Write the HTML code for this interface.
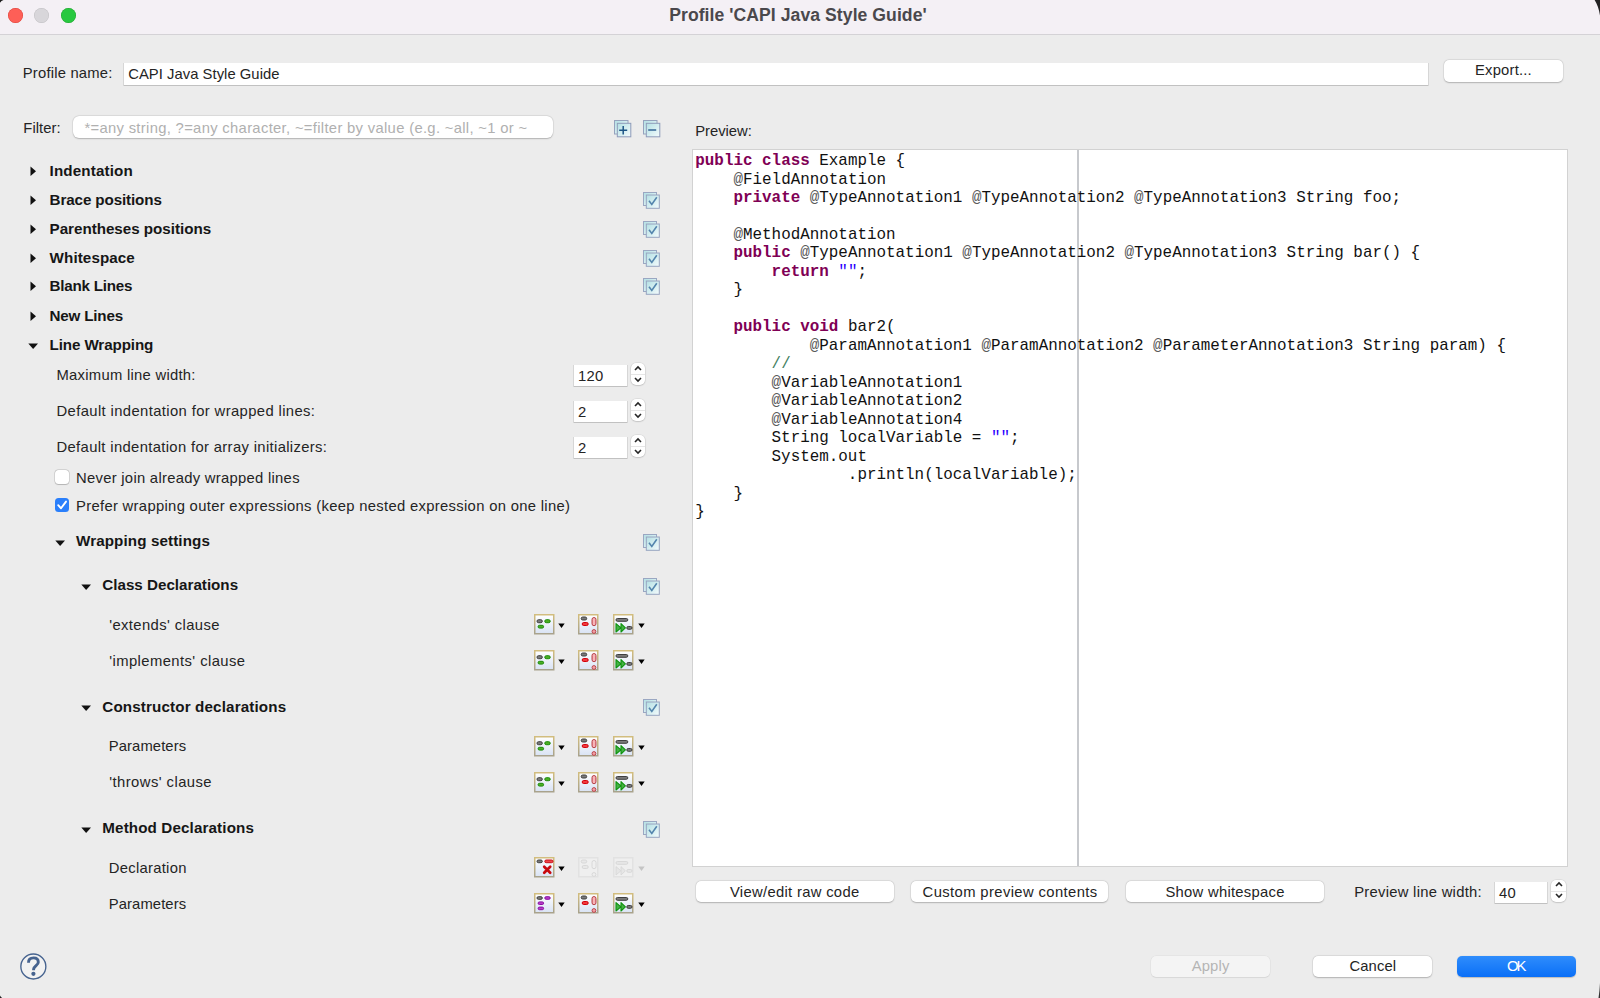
<!DOCTYPE html><html><head><meta charset="utf-8"><style>
html,body{margin:0;padding:0;}
body{width:1600px;height:998px;position:relative;overflow:hidden;background:#ececec;font-family:"Liberation Sans", sans-serif;}
.t{position:absolute;white-space:pre;}
.btn{position:absolute;background:#fff;border-radius:5px;box-shadow:0 0 0 0.5px rgba(0,0,0,0.07),0 0.5px 1.5px rgba(0,0,0,0.22);}
.fld{position:absolute;background:#fff;box-shadow:0 0.5px 0 0.5px rgba(0,0,0,0.18);}
</style></head><body>
<div style="position:absolute;left:0px;top:0px;width:1600px;height:34px;background:#f4f0f5"></div>
<div style="position:absolute;left:0px;top:34px;width:1600px;height:1px;background:#d4d2d6"></div>
<div style="position:absolute;left:8.1px;top:7.9px;width:15.4px;height:15.4px;background:#fe5f57;border-radius:50%;box-shadow:inset 0 0 0 0.5px rgba(200,40,30,0.6)"></div>
<div style="position:absolute;left:34.1px;top:7.9px;width:15.4px;height:15.4px;background:#d8d6da;border-radius:50%;box-shadow:inset 0 0 0 0.5px rgba(0,0,0,0.12)"></div>
<div style="position:absolute;left:61px;top:7.9px;width:15.4px;height:15.4px;background:#28c840;border-radius:50%;box-shadow:inset 0 0 0 0.5px rgba(20,140,30,0.6)"></div>
<div class="t" style="left:669.20px;top:4.78px;font-size:17.6px;line-height:20.24px;font-weight:bold;color:#4a484c;letter-spacing:0.059px;">Profile 'CAPI Java Style Guide'</div>
<div class="t" style="left:22.80px;top:65.26px;font-size:14.8px;line-height:17.02px;font-weight:normal;color:#242424;letter-spacing:0.193px;">Profile name:</div>
<div class="fld" style="left:124px;top:63px;width:1304px;height:22px;"></div>
<div class="t" style="left:128.20px;top:66.26px;font-size:14.8px;line-height:17.02px;font-weight:normal;color:#242424;letter-spacing:0.038px;">CAPI Java Style Guide</div>
<div class="btn" style="left:1444px;top:60px;width:119px;height:22px;"></div>
<div class="t" style="left:1475.00px;top:62.26px;font-size:14.8px;line-height:17.02px;font-weight:normal;color:#242424;letter-spacing:0.199px;">Export...</div>
<div class="t" style="left:23.30px;top:120.26px;font-size:14.8px;line-height:17.02px;font-weight:normal;color:#242424;letter-spacing:0.067px;">Filter:</div>
<div class="btn" style="left:73px;top:116px;width:480px;height:22px;border-radius:6px"></div>
<div class="t" style="left:84.40px;top:120.26px;font-size:14.8px;line-height:17.02px;font-weight:normal;color:#b0b0b0;letter-spacing:0.316px;">*=any string, ?=any character, ~=filter by value (e.g. ~all, ~1 or ~</div>
<div class="t" style="left:695.25px;top:122.96px;font-size:14.8px;line-height:17.02px;font-weight:normal;color:#242424;letter-spacing:-0.036px;">Preview:</div>
<div style="position:absolute;left:692px;top:149px;width:876px;height:718px;background:#fff;box-shadow:inset 0 0 0 1px #d2d2d2"></div>
<div style="position:absolute;left:1077px;top:150px;width:2px;height:716px;background:#c7c9cd"></div>
<svg width="0" height="0" style="position:absolute"><defs>
<linearGradient id="gbg" x1="0" y1="0" x2="0" y2="1"><stop offset="0" stop-color="#ffffff"/><stop offset="1" stop-color="#d9e3f4"/></linearGradient>
<linearGradient id="gbgd" x1="0" y1="0" x2="0" y2="1"><stop offset="0" stop-color="#f3f3f3"/><stop offset="1" stop-color="#ebebeb"/></linearGradient>
<linearGradient id="gbord" x1="0" y1="0" x2="0" y2="1"><stop offset="0" stop-color="#d2bd7e"/><stop offset="1" stop-color="#a8a28c"/></linearGradient>
<linearGradient id="gcb" x1="0" y1="0" x2="1" y2="1"><stop offset="0" stop-color="#b3e0e4"/><stop offset="1" stop-color="#f4fbfc"/></linearGradient>
<linearGradient id="gex" x1="0" y1="0" x2="1" y2="0"><stop offset="0" stop-color="#ec8a90"/><stop offset="0.5" stop-color="#fbc4c7"/><stop offset="1" stop-color="#e8828a"/></linearGradient>
</defs></svg>
<svg style="position:absolute;left:613.5px;top:119.5px;overflow:visible;" width="18" height="18" viewBox="0 0 18 18"><rect x="0.5" y="0.5" width="13.5" height="13.5" fill="url(#gcb)" stroke="#95a2bd" stroke-width="1"/><rect x="3.3" y="3.3" width="13.5" height="13.5" fill="url(#gcb)" stroke="#8e9bba" stroke-width="1"/><path d="M5.2 10.2 L13.2 10.2 M9.2 6 L9.2 14.5" stroke="#1d5586" stroke-width="1.5"/></svg>
<svg style="position:absolute;left:642.5px;top:119.5px;overflow:visible;" width="18" height="18" viewBox="0 0 18 18"><rect x="0.5" y="0.5" width="13.5" height="13.5" fill="url(#gcb)" stroke="#95a2bd" stroke-width="1"/><rect x="3.3" y="3.3" width="13.5" height="13.5" fill="url(#gcb)" stroke="#8e9bba" stroke-width="1"/><path d="M5.2 10 L13.2 10" stroke="#3e6d9b" stroke-width="1.6"/></svg>
<svg style="position:absolute;left:30px;top:165.5px;overflow:visible;" width="7" height="11" viewBox="0 0 7 11"><path d="M0.5 0.5 L6 5.2 L0.5 10 Z" fill="#111"/></svg>
<div class="t" style="left:49.60px;top:161.59px;font-size:15.2px;line-height:17.48px;font-weight:bold;color:#161616;letter-spacing:0.139px;">Indentation</div>
<svg style="position:absolute;left:30px;top:194.5px;overflow:visible;" width="7" height="11" viewBox="0 0 7 11"><path d="M0.5 0.5 L6 5.2 L0.5 10 Z" fill="#111"/></svg>
<div class="t" style="left:49.60px;top:190.59px;font-size:15.2px;line-height:17.48px;font-weight:bold;color:#161616;letter-spacing:-0.117px;">Brace positions</div>
<svg style="position:absolute;left:643px;top:191.5px;overflow:visible;" width="18" height="17" viewBox="0 0 18 17"><rect x="0.5" y="0.5" width="13" height="13" fill="url(#gcb)" stroke="#9aa7c2" stroke-width="1"/><rect x="3.3" y="3" width="13" height="13.3" fill="url(#gcb)" stroke="#97a4c0" stroke-width="1"/><path d="M6 8.8 L8.8 12.5 L13.8 5.3" fill="none" stroke="#5485ad" stroke-width="1.6"/></svg>
<svg style="position:absolute;left:30px;top:223.5px;overflow:visible;" width="7" height="11" viewBox="0 0 7 11"><path d="M0.5 0.5 L6 5.2 L0.5 10 Z" fill="#111"/></svg>
<div class="t" style="left:49.60px;top:219.59px;font-size:15.2px;line-height:17.48px;font-weight:bold;color:#161616;letter-spacing:-0.027px;">Parentheses positions</div>
<svg style="position:absolute;left:643px;top:220.5px;overflow:visible;" width="18" height="17" viewBox="0 0 18 17"><rect x="0.5" y="0.5" width="13" height="13" fill="url(#gcb)" stroke="#9aa7c2" stroke-width="1"/><rect x="3.3" y="3" width="13" height="13.3" fill="url(#gcb)" stroke="#97a4c0" stroke-width="1"/><path d="M6 8.8 L8.8 12.5 L13.8 5.3" fill="none" stroke="#5485ad" stroke-width="1.6"/></svg>
<svg style="position:absolute;left:30px;top:252.5px;overflow:visible;" width="7" height="11" viewBox="0 0 7 11"><path d="M0.5 0.5 L6 5.2 L0.5 10 Z" fill="#111"/></svg>
<div class="t" style="left:49.60px;top:248.59px;font-size:15.2px;line-height:17.48px;font-weight:bold;color:#161616;letter-spacing:0.092px;">Whitespace</div>
<svg style="position:absolute;left:643px;top:249.5px;overflow:visible;" width="18" height="17" viewBox="0 0 18 17"><rect x="0.5" y="0.5" width="13" height="13" fill="url(#gcb)" stroke="#9aa7c2" stroke-width="1"/><rect x="3.3" y="3" width="13" height="13.3" fill="url(#gcb)" stroke="#97a4c0" stroke-width="1"/><path d="M6 8.8 L8.8 12.5 L13.8 5.3" fill="none" stroke="#5485ad" stroke-width="1.6"/></svg>
<svg style="position:absolute;left:30px;top:281.4px;overflow:visible;" width="7" height="11" viewBox="0 0 7 11"><path d="M0.5 0.5 L6 5.2 L0.5 10 Z" fill="#111"/></svg>
<div class="t" style="left:49.60px;top:277.49px;font-size:15.2px;line-height:17.48px;font-weight:bold;color:#161616;letter-spacing:-0.241px;">Blank Lines</div>
<svg style="position:absolute;left:643px;top:278.4px;overflow:visible;" width="18" height="17" viewBox="0 0 18 17"><rect x="0.5" y="0.5" width="13" height="13" fill="url(#gcb)" stroke="#9aa7c2" stroke-width="1"/><rect x="3.3" y="3" width="13" height="13.3" fill="url(#gcb)" stroke="#97a4c0" stroke-width="1"/><path d="M6 8.8 L8.8 12.5 L13.8 5.3" fill="none" stroke="#5485ad" stroke-width="1.6"/></svg>
<svg style="position:absolute;left:30px;top:310.59999999999997px;overflow:visible;" width="7" height="11" viewBox="0 0 7 11"><path d="M0.5 0.5 L6 5.2 L0.5 10 Z" fill="#111"/></svg>
<div class="t" style="left:49.60px;top:306.69px;font-size:15.2px;line-height:17.48px;font-weight:bold;color:#161616;letter-spacing:-0.196px;">New Lines</div>
<svg style="position:absolute;left:28px;top:342.5px;overflow:visible;" width="11" height="7" viewBox="0 0 11 7"><path d="M0.3 0.5 L10 0.5 L5.15 6 Z" fill="#111"/></svg>
<div class="t" style="left:49.60px;top:335.79px;font-size:15.2px;line-height:17.48px;font-weight:bold;color:#161616;letter-spacing:-0.122px;">Line Wrapping</div>
<div class="t" style="left:56.50px;top:367.26px;font-size:14.8px;line-height:17.02px;font-weight:normal;color:#242424;letter-spacing:0.274px;">Maximum line width:</div>
<div class="fld" style="left:574px;top:365px;width:53px;height:21px;"></div>
<div class="t" style="left:578.00px;top:367.56px;font-size:14.8px;line-height:17.02px;font-weight:normal;color:#242424;letter-spacing:0.300px;">120</div>
<div class="btn" style="left:631px;top:363px;width:14px;height:22px;border-radius:5px"></div>
<div style="position:absolute;left:631px;top:374px;width:14px;height:1px;background:#e6e6e6"></div>
<svg style="position:absolute;left:634px;top:365.3px;overflow:visible;" width="8" height="20" viewBox="0 0 8 20"><path d="M1 5 L4 2 L7 5" fill="none" stroke="#262626" stroke-width="1.6"/><path d="M1 13 L4 16 L7 13" fill="none" stroke="#262626" stroke-width="1.6"/></svg>
<div class="t" style="left:56.50px;top:403.26px;font-size:14.8px;line-height:17.02px;font-weight:normal;color:#242424;letter-spacing:0.383px;">Default indentation for wrapped lines:</div>
<div class="fld" style="left:574px;top:401px;width:53px;height:21px;"></div>
<div class="t" style="left:578.00px;top:403.56px;font-size:14.8px;line-height:17.02px;font-weight:normal;color:#242424;letter-spacing:0.300px;">2</div>
<div class="btn" style="left:631px;top:399px;width:14px;height:22px;border-radius:5px"></div>
<div style="position:absolute;left:631px;top:410px;width:14px;height:1px;background:#e6e6e6"></div>
<svg style="position:absolute;left:634px;top:401.3px;overflow:visible;" width="8" height="20" viewBox="0 0 8 20"><path d="M1 5 L4 2 L7 5" fill="none" stroke="#262626" stroke-width="1.6"/><path d="M1 13 L4 16 L7 13" fill="none" stroke="#262626" stroke-width="1.6"/></svg>
<div class="t" style="left:56.50px;top:439.26px;font-size:14.8px;line-height:17.02px;font-weight:normal;color:#242424;letter-spacing:0.349px;">Default indentation for array initializers:</div>
<div class="fld" style="left:574px;top:437px;width:53px;height:21px;"></div>
<div class="t" style="left:578.00px;top:439.56px;font-size:14.8px;line-height:17.02px;font-weight:normal;color:#242424;letter-spacing:0.300px;">2</div>
<div class="btn" style="left:631px;top:435px;width:14px;height:22px;border-radius:5px"></div>
<div style="position:absolute;left:631px;top:446px;width:14px;height:1px;background:#e6e6e6"></div>
<svg style="position:absolute;left:634px;top:437.3px;overflow:visible;" width="8" height="20" viewBox="0 0 8 20"><path d="M1 5 L4 2 L7 5" fill="none" stroke="#262626" stroke-width="1.6"/><path d="M1 13 L4 16 L7 13" fill="none" stroke="#262626" stroke-width="1.6"/></svg>
<div style="position:absolute;left:55px;top:470px;width:14px;height:14px;background:#fff;border-radius:3.5px;box-shadow:0 0 0 0.5px rgba(0,0,0,0.2),0 0.5px 1px rgba(0,0,0,0.15)"></div>
<div class="t" style="left:76.00px;top:470.26px;font-size:14.8px;line-height:17.02px;font-weight:normal;color:#242424;letter-spacing:0.286px;">Never join already wrapped lines</div>
<div style="position:absolute;left:55px;top:498px;width:14px;height:14px;background:#2a7ffb;border-radius:3.5px"></div>
<svg style="position:absolute;left:55px;top:498px;overflow:visible;" width="14" height="14" viewBox="0 0 14 14"><path d="M3.2 7.2 L6 10.3 L11 3.6" fill="none" stroke="#fff" stroke-width="1.9" stroke-linecap="round" stroke-linejoin="round"/></svg>
<div class="t" style="left:76.00px;top:498.26px;font-size:14.8px;line-height:17.02px;font-weight:normal;color:#242424;letter-spacing:0.316px;">Prefer wrapping outer expressions (keep nested expression on one line)</div>
<svg style="position:absolute;left:54.5px;top:539.5px;overflow:visible;" width="11" height="7" viewBox="0 0 11 7"><path d="M0.3 0.5 L10 0.5 L5.15 6 Z" fill="#111"/></svg>
<div class="t" style="left:76.00px;top:531.99px;font-size:15.2px;line-height:17.48px;font-weight:bold;color:#161616;letter-spacing:0.106px;">Wrapping settings</div>
<svg style="position:absolute;left:643px;top:533.5px;overflow:visible;" width="18" height="17" viewBox="0 0 18 17"><rect x="0.5" y="0.5" width="13" height="13" fill="url(#gcb)" stroke="#9aa7c2" stroke-width="1"/><rect x="3.3" y="3" width="13" height="13.3" fill="url(#gcb)" stroke="#97a4c0" stroke-width="1"/><path d="M6 8.8 L8.8 12.5 L13.8 5.3" fill="none" stroke="#5485ad" stroke-width="1.6"/></svg>
<svg style="position:absolute;left:81px;top:583.6px;overflow:visible;" width="11" height="7" viewBox="0 0 11 7"><path d="M0.3 0.5 L10 0.5 L5.15 6 Z" fill="#111"/></svg>
<div class="t" style="left:102.30px;top:576.09px;font-size:15.2px;line-height:17.48px;font-weight:bold;color:#161616;letter-spacing:-0.007px;">Class Declarations</div>
<svg style="position:absolute;left:643px;top:577.5px;overflow:visible;" width="18" height="17" viewBox="0 0 18 17"><rect x="0.5" y="0.5" width="13" height="13" fill="url(#gcb)" stroke="#9aa7c2" stroke-width="1"/><rect x="3.3" y="3" width="13" height="13.3" fill="url(#gcb)" stroke="#97a4c0" stroke-width="1"/><path d="M6 8.8 L8.8 12.5 L13.8 5.3" fill="none" stroke="#5485ad" stroke-width="1.6"/></svg>
<div class="t" style="left:109.20px;top:616.96px;font-size:14.8px;line-height:17.02px;font-weight:normal;color:#242424;letter-spacing:0.395px;">'extends' clause</div>
<svg style="position:absolute;left:533.5px;top:614px;overflow:visible;" width="20.5" height="20.5" viewBox="0 0 20.5 20.5"><rect x="0.75" y="0.75" width="19" height="19" fill="url(#gbg)" stroke="url(#gbord)" stroke-width="1.5"/><rect x="3.0" y="5.7" width="5.300000000000001" height="2.999999999999999" rx="1.4999999999999996" ry="1.4999999999999996" fill="#7a7a7a" stroke="#3f3f3f" stroke-width="1"/><rect x="10.8" y="5.7" width="5.399999999999999" height="2.999999999999999" rx="1.4999999999999996" ry="1.4999999999999996" fill="#4caf25" stroke="#1a8a08" stroke-width="1"/><rect x="4.1" y="11.3" width="5.5" height="2.799999999999999" rx="1.3999999999999995" ry="1.3999999999999995" fill="#4caf25" stroke="#1a8a08" stroke-width="1"/></svg>
<svg style="position:absolute;left:558px;top:622.5px;overflow:visible;" width="7" height="6" viewBox="0 0 7 6"><path d="M0.3 0.5 L6.7 0.5 L3.5 5 Z" fill="#000"/></svg>
<svg style="position:absolute;left:578.2px;top:614px;overflow:visible;" width="20.5" height="20.5" viewBox="0 0 20.5 20.5"><rect x="0.75" y="0.75" width="19" height="19" fill="url(#gbg)" stroke="url(#gbord)" stroke-width="1.5"/><rect x="3.2" y="3.0" width="5.499999999999999" height="3.0" rx="1.5" ry="1.5" fill="#7a7a7a" stroke="#3f3f3f" stroke-width="1"/><rect x="4.2" y="8.5" width="5.999999999999999" height="3" rx="1.5" ry="1.5" fill="#f03a40" stroke="#d4000a" stroke-width="1"/><rect x="14" y="3.5" width="4" height="8.2" rx="2" fill="url(#gex)" stroke="#b8454b"/><circle cx="15.95" cy="17.5" r="1.9" fill="#f2a0a4" stroke="#b8454b"/></svg>
<svg style="position:absolute;left:612.8px;top:614px;overflow:visible;" width="20.5" height="20.5" viewBox="0 0 20.5 20.5"><rect x="0.75" y="0.75" width="19" height="19" fill="url(#gbg)" stroke="url(#gbord)" stroke-width="1.5"/><rect x="3.0" y="4.5" width="11.8" height="2.8" rx="1.4" ry="1.4" fill="#7a7a7a" stroke="#3f3f3f" stroke-width="1"/><path d="M3 9.6 L7.9 13.8 L3 18 Z M8 9.6 L12.4 13.8 L8 18 Z" fill="#45b045" stroke="#0d940d" stroke-width="1.1" stroke-linejoin="round"/><rect x="13.8" y="12.5" width="5.199999999999999" height="2.8000000000000007" rx="1.4000000000000004" ry="1.4000000000000004" fill="#7a7a7a" stroke="#3f3f3f" stroke-width="1"/></svg>
<svg style="position:absolute;left:637.5px;top:622.5px;overflow:visible;" width="7" height="6" viewBox="0 0 7 6"><path d="M0.3 0.5 L6.7 0.5 L3.5 5 Z" fill="#000"/></svg>
<div class="t" style="left:109.20px;top:652.86px;font-size:14.8px;line-height:17.02px;font-weight:normal;color:#242424;letter-spacing:0.427px;">'implements' clause</div>
<svg style="position:absolute;left:533.5px;top:650px;overflow:visible;" width="20.5" height="20.5" viewBox="0 0 20.5 20.5"><rect x="0.75" y="0.75" width="19" height="19" fill="url(#gbg)" stroke="url(#gbord)" stroke-width="1.5"/><rect x="3.0" y="5.7" width="5.300000000000001" height="2.999999999999999" rx="1.4999999999999996" ry="1.4999999999999996" fill="#7a7a7a" stroke="#3f3f3f" stroke-width="1"/><rect x="10.8" y="5.7" width="5.399999999999999" height="2.999999999999999" rx="1.4999999999999996" ry="1.4999999999999996" fill="#4caf25" stroke="#1a8a08" stroke-width="1"/><rect x="4.1" y="11.3" width="5.5" height="2.799999999999999" rx="1.3999999999999995" ry="1.3999999999999995" fill="#4caf25" stroke="#1a8a08" stroke-width="1"/></svg>
<svg style="position:absolute;left:558px;top:658.5px;overflow:visible;" width="7" height="6" viewBox="0 0 7 6"><path d="M0.3 0.5 L6.7 0.5 L3.5 5 Z" fill="#000"/></svg>
<svg style="position:absolute;left:578.2px;top:650px;overflow:visible;" width="20.5" height="20.5" viewBox="0 0 20.5 20.5"><rect x="0.75" y="0.75" width="19" height="19" fill="url(#gbg)" stroke="url(#gbord)" stroke-width="1.5"/><rect x="3.2" y="3.0" width="5.499999999999999" height="3.0" rx="1.5" ry="1.5" fill="#7a7a7a" stroke="#3f3f3f" stroke-width="1"/><rect x="4.2" y="8.5" width="5.999999999999999" height="3" rx="1.5" ry="1.5" fill="#f03a40" stroke="#d4000a" stroke-width="1"/><rect x="14" y="3.5" width="4" height="8.2" rx="2" fill="url(#gex)" stroke="#b8454b"/><circle cx="15.95" cy="17.5" r="1.9" fill="#f2a0a4" stroke="#b8454b"/></svg>
<svg style="position:absolute;left:612.8px;top:650px;overflow:visible;" width="20.5" height="20.5" viewBox="0 0 20.5 20.5"><rect x="0.75" y="0.75" width="19" height="19" fill="url(#gbg)" stroke="url(#gbord)" stroke-width="1.5"/><rect x="3.0" y="4.5" width="11.8" height="2.8" rx="1.4" ry="1.4" fill="#7a7a7a" stroke="#3f3f3f" stroke-width="1"/><path d="M3 9.6 L7.9 13.8 L3 18 Z M8 9.6 L12.4 13.8 L8 18 Z" fill="#45b045" stroke="#0d940d" stroke-width="1.1" stroke-linejoin="round"/><rect x="13.8" y="12.5" width="5.199999999999999" height="2.8000000000000007" rx="1.4000000000000004" ry="1.4000000000000004" fill="#7a7a7a" stroke="#3f3f3f" stroke-width="1"/></svg>
<svg style="position:absolute;left:637.5px;top:658.5px;overflow:visible;" width="7" height="6" viewBox="0 0 7 6"><path d="M0.3 0.5 L6.7 0.5 L3.5 5 Z" fill="#000"/></svg>
<svg style="position:absolute;left:81px;top:705.3px;overflow:visible;" width="11" height="7" viewBox="0 0 11 7"><path d="M0.3 0.5 L10 0.5 L5.15 6 Z" fill="#111"/></svg>
<div class="t" style="left:102.30px;top:697.79px;font-size:15.2px;line-height:17.48px;font-weight:bold;color:#161616;letter-spacing:0.141px;">Constructor declarations</div>
<svg style="position:absolute;left:643px;top:698.5px;overflow:visible;" width="18" height="17" viewBox="0 0 18 17"><rect x="0.5" y="0.5" width="13" height="13" fill="url(#gcb)" stroke="#9aa7c2" stroke-width="1"/><rect x="3.3" y="3" width="13" height="13.3" fill="url(#gcb)" stroke="#97a4c0" stroke-width="1"/><path d="M6 8.8 L8.8 12.5 L13.8 5.3" fill="none" stroke="#5485ad" stroke-width="1.6"/></svg>
<div class="t" style="left:108.80px;top:738.36px;font-size:14.8px;line-height:17.02px;font-weight:normal;color:#242424;letter-spacing:0.089px;">Parameters</div>
<svg style="position:absolute;left:533.5px;top:736px;overflow:visible;" width="20.5" height="20.5" viewBox="0 0 20.5 20.5"><rect x="0.75" y="0.75" width="19" height="19" fill="url(#gbg)" stroke="url(#gbord)" stroke-width="1.5"/><rect x="3.0" y="5.7" width="5.300000000000001" height="2.999999999999999" rx="1.4999999999999996" ry="1.4999999999999996" fill="#7a7a7a" stroke="#3f3f3f" stroke-width="1"/><rect x="10.8" y="5.7" width="5.399999999999999" height="2.999999999999999" rx="1.4999999999999996" ry="1.4999999999999996" fill="#4caf25" stroke="#1a8a08" stroke-width="1"/><rect x="4.1" y="11.3" width="5.5" height="2.799999999999999" rx="1.3999999999999995" ry="1.3999999999999995" fill="#4caf25" stroke="#1a8a08" stroke-width="1"/></svg>
<svg style="position:absolute;left:558px;top:744.5px;overflow:visible;" width="7" height="6" viewBox="0 0 7 6"><path d="M0.3 0.5 L6.7 0.5 L3.5 5 Z" fill="#000"/></svg>
<svg style="position:absolute;left:578.2px;top:736px;overflow:visible;" width="20.5" height="20.5" viewBox="0 0 20.5 20.5"><rect x="0.75" y="0.75" width="19" height="19" fill="url(#gbg)" stroke="url(#gbord)" stroke-width="1.5"/><rect x="3.2" y="3.0" width="5.499999999999999" height="3.0" rx="1.5" ry="1.5" fill="#7a7a7a" stroke="#3f3f3f" stroke-width="1"/><rect x="4.2" y="8.5" width="5.999999999999999" height="3" rx="1.5" ry="1.5" fill="#f03a40" stroke="#d4000a" stroke-width="1"/><rect x="14" y="3.5" width="4" height="8.2" rx="2" fill="url(#gex)" stroke="#b8454b"/><circle cx="15.95" cy="17.5" r="1.9" fill="#f2a0a4" stroke="#b8454b"/></svg>
<svg style="position:absolute;left:612.8px;top:736px;overflow:visible;" width="20.5" height="20.5" viewBox="0 0 20.5 20.5"><rect x="0.75" y="0.75" width="19" height="19" fill="url(#gbg)" stroke="url(#gbord)" stroke-width="1.5"/><rect x="3.0" y="4.5" width="11.8" height="2.8" rx="1.4" ry="1.4" fill="#7a7a7a" stroke="#3f3f3f" stroke-width="1"/><path d="M3 9.6 L7.9 13.8 L3 18 Z M8 9.6 L12.4 13.8 L8 18 Z" fill="#45b045" stroke="#0d940d" stroke-width="1.1" stroke-linejoin="round"/><rect x="13.8" y="12.5" width="5.199999999999999" height="2.8000000000000007" rx="1.4000000000000004" ry="1.4000000000000004" fill="#7a7a7a" stroke="#3f3f3f" stroke-width="1"/></svg>
<svg style="position:absolute;left:637.5px;top:744.5px;overflow:visible;" width="7" height="6" viewBox="0 0 7 6"><path d="M0.3 0.5 L6.7 0.5 L3.5 5 Z" fill="#000"/></svg>
<div class="t" style="left:109.20px;top:773.86px;font-size:14.8px;line-height:17.02px;font-weight:normal;color:#242424;letter-spacing:0.447px;">'throws' clause</div>
<svg style="position:absolute;left:533.5px;top:772px;overflow:visible;" width="20.5" height="20.5" viewBox="0 0 20.5 20.5"><rect x="0.75" y="0.75" width="19" height="19" fill="url(#gbg)" stroke="url(#gbord)" stroke-width="1.5"/><rect x="3.0" y="5.7" width="5.300000000000001" height="2.999999999999999" rx="1.4999999999999996" ry="1.4999999999999996" fill="#7a7a7a" stroke="#3f3f3f" stroke-width="1"/><rect x="10.8" y="5.7" width="5.399999999999999" height="2.999999999999999" rx="1.4999999999999996" ry="1.4999999999999996" fill="#4caf25" stroke="#1a8a08" stroke-width="1"/><rect x="4.1" y="11.3" width="5.5" height="2.799999999999999" rx="1.3999999999999995" ry="1.3999999999999995" fill="#4caf25" stroke="#1a8a08" stroke-width="1"/></svg>
<svg style="position:absolute;left:558px;top:780.5px;overflow:visible;" width="7" height="6" viewBox="0 0 7 6"><path d="M0.3 0.5 L6.7 0.5 L3.5 5 Z" fill="#000"/></svg>
<svg style="position:absolute;left:578.2px;top:772px;overflow:visible;" width="20.5" height="20.5" viewBox="0 0 20.5 20.5"><rect x="0.75" y="0.75" width="19" height="19" fill="url(#gbg)" stroke="url(#gbord)" stroke-width="1.5"/><rect x="3.2" y="3.0" width="5.499999999999999" height="3.0" rx="1.5" ry="1.5" fill="#7a7a7a" stroke="#3f3f3f" stroke-width="1"/><rect x="4.2" y="8.5" width="5.999999999999999" height="3" rx="1.5" ry="1.5" fill="#f03a40" stroke="#d4000a" stroke-width="1"/><rect x="14" y="3.5" width="4" height="8.2" rx="2" fill="url(#gex)" stroke="#b8454b"/><circle cx="15.95" cy="17.5" r="1.9" fill="#f2a0a4" stroke="#b8454b"/></svg>
<svg style="position:absolute;left:612.8px;top:772px;overflow:visible;" width="20.5" height="20.5" viewBox="0 0 20.5 20.5"><rect x="0.75" y="0.75" width="19" height="19" fill="url(#gbg)" stroke="url(#gbord)" stroke-width="1.5"/><rect x="3.0" y="4.5" width="11.8" height="2.8" rx="1.4" ry="1.4" fill="#7a7a7a" stroke="#3f3f3f" stroke-width="1"/><path d="M3 9.6 L7.9 13.8 L3 18 Z M8 9.6 L12.4 13.8 L8 18 Z" fill="#45b045" stroke="#0d940d" stroke-width="1.1" stroke-linejoin="round"/><rect x="13.8" y="12.5" width="5.199999999999999" height="2.8000000000000007" rx="1.4000000000000004" ry="1.4000000000000004" fill="#7a7a7a" stroke="#3f3f3f" stroke-width="1"/></svg>
<svg style="position:absolute;left:637.5px;top:780.5px;overflow:visible;" width="7" height="6" viewBox="0 0 7 6"><path d="M0.3 0.5 L6.7 0.5 L3.5 5 Z" fill="#000"/></svg>
<svg style="position:absolute;left:81px;top:826.5px;overflow:visible;" width="11" height="7" viewBox="0 0 11 7"><path d="M0.3 0.5 L10 0.5 L5.15 6 Z" fill="#111"/></svg>
<div class="t" style="left:102.30px;top:818.99px;font-size:15.2px;line-height:17.48px;font-weight:bold;color:#161616;letter-spacing:0.123px;">Method Declarations</div>
<svg style="position:absolute;left:643px;top:820.5px;overflow:visible;" width="18" height="17" viewBox="0 0 18 17"><rect x="0.5" y="0.5" width="13" height="13" fill="url(#gcb)" stroke="#9aa7c2" stroke-width="1"/><rect x="3.3" y="3" width="13" height="13.3" fill="url(#gcb)" stroke="#97a4c0" stroke-width="1"/><path d="M6 8.8 L8.8 12.5 L13.8 5.3" fill="none" stroke="#5485ad" stroke-width="1.6"/></svg>
<div class="t" style="left:108.80px;top:860.06px;font-size:14.8px;line-height:17.02px;font-weight:normal;color:#242424;letter-spacing:0.274px;">Declaration</div>
<svg style="position:absolute;left:533.5px;top:857px;overflow:visible;" width="20.5" height="20.5" viewBox="0 0 20.5 20.5"><rect x="0.75" y="0.75" width="19" height="19" fill="url(#gbg)" stroke="url(#gbord)" stroke-width="1.5"/><rect x="3.0" y="3.0" width="5.300000000000001" height="2.7" rx="1.35" ry="1.35" fill="#7a7a7a" stroke="#3f3f3f" stroke-width="1"/><rect x="10.8" y="3.0" width="8.2" height="2.7" rx="1.35" ry="1.35" fill="#f0454a" stroke="#c8101a" stroke-width="1"/><path d="M10.2 9.8 L16.2 15.8 M16.2 9.8 L10.2 15.8" stroke="#c8080e" stroke-width="2.7" stroke-linecap="round"/></svg>
<svg style="position:absolute;left:558px;top:865.5px;overflow:visible;" width="7" height="6" viewBox="0 0 7 6"><path d="M0.3 0.5 L6.7 0.5 L3.5 5 Z" fill="#000"/></svg>
<svg style="position:absolute;left:578.2px;top:857px;overflow:visible;" width="20.5" height="20.5" viewBox="0 0 20.5 20.5"><rect x="0.75" y="0.75" width="19" height="19" fill="#efefef" stroke="#e2e2e2" stroke-width="1.5"/><rect x="3.2" y="3.0" width="5.499999999999999" height="3.0" rx="1.5" ry="1.5" fill="#e8e8e8" stroke="#d8d8d8" stroke-width="1"/><rect x="4.2" y="8.5" width="5.999999999999999" height="3" rx="1.5" ry="1.5" fill="#e8e8e8" stroke="#d8d8d8" stroke-width="1"/><rect x="14" y="3.5" width="4" height="8.2" rx="2" fill="#efefef" stroke="#d8d8d8"/><circle cx="15.95" cy="17.5" r="1.9" fill="#efefef" stroke="#d8d8d8"/></svg>
<svg style="position:absolute;left:612.8px;top:857px;overflow:visible;" width="20.5" height="20.5" viewBox="0 0 20.5 20.5"><rect x="0.75" y="0.75" width="19" height="19" fill="#efefef" stroke="#e2e2e2" stroke-width="1.5"/><rect x="3.0" y="4.5" width="11.8" height="2.8" rx="1.4" ry="1.4" fill="#e6e6e6" stroke="#d8d8d8" stroke-width="1"/><path d="M3 9.6 L7.9 13.8 L3 18 Z M8 9.6 L12.4 13.8 L8 18 Z" fill="#e6e6e6" stroke="#d8d8d8" stroke-width="0.9"/><rect x="13.8" y="12.5" width="5.199999999999999" height="2.8000000000000007" rx="1.4000000000000004" ry="1.4000000000000004" fill="#e6e6e6" stroke="#d8d8d8" stroke-width="1"/></svg>
<svg style="position:absolute;left:637.5px;top:865.5px;overflow:visible;" width="7" height="6" viewBox="0 0 7 6"><path d="M0.3 0.5 L6.7 0.5 L3.5 5 Z" fill="#c4c4c4"/></svg>
<div class="t" style="left:108.80px;top:895.76px;font-size:14.8px;line-height:17.02px;font-weight:normal;color:#242424;letter-spacing:0.089px;">Parameters</div>
<svg style="position:absolute;left:533.5px;top:893px;overflow:visible;" width="20.5" height="20.5" viewBox="0 0 20.5 20.5"><rect x="0.75" y="0.75" width="19" height="19" fill="url(#gbg)" stroke="url(#gbord)" stroke-width="1.5"/><rect x="3.0" y="3.7" width="5.300000000000001" height="2.5999999999999996" rx="1.2999999999999998" ry="1.2999999999999998" fill="#7a7a7a" stroke="#3f3f3f" stroke-width="1"/><rect x="10.8" y="3.7" width="5.399999999999999" height="2.5999999999999996" rx="1.2999999999999998" ry="1.2999999999999998" fill="#b63cc8" stroke="#8a10a2" stroke-width="1"/><rect x="4.1" y="8.9" width="5.5" height="2.5999999999999996" rx="1.2999999999999998" ry="1.2999999999999998" fill="#b63cc8" stroke="#8a10a2" stroke-width="1"/><rect x="4.1" y="14.1" width="5.5" height="2.5999999999999996" rx="1.2999999999999998" ry="1.2999999999999998" fill="#b63cc8" stroke="#8a10a2" stroke-width="1"/></svg>
<svg style="position:absolute;left:558px;top:901.5px;overflow:visible;" width="7" height="6" viewBox="0 0 7 6"><path d="M0.3 0.5 L6.7 0.5 L3.5 5 Z" fill="#000"/></svg>
<svg style="position:absolute;left:578.2px;top:893px;overflow:visible;" width="20.5" height="20.5" viewBox="0 0 20.5 20.5"><rect x="0.75" y="0.75" width="19" height="19" fill="url(#gbg)" stroke="url(#gbord)" stroke-width="1.5"/><rect x="3.2" y="3.0" width="5.499999999999999" height="3.0" rx="1.5" ry="1.5" fill="#7a7a7a" stroke="#3f3f3f" stroke-width="1"/><rect x="4.2" y="8.5" width="5.999999999999999" height="3" rx="1.5" ry="1.5" fill="#f03a40" stroke="#d4000a" stroke-width="1"/><rect x="14" y="3.5" width="4" height="8.2" rx="2" fill="url(#gex)" stroke="#b8454b"/><circle cx="15.95" cy="17.5" r="1.9" fill="#f2a0a4" stroke="#b8454b"/></svg>
<svg style="position:absolute;left:612.8px;top:893px;overflow:visible;" width="20.5" height="20.5" viewBox="0 0 20.5 20.5"><rect x="0.75" y="0.75" width="19" height="19" fill="url(#gbg)" stroke="url(#gbord)" stroke-width="1.5"/><rect x="3.0" y="4.5" width="11.8" height="2.8" rx="1.4" ry="1.4" fill="#7a7a7a" stroke="#3f3f3f" stroke-width="1"/><path d="M3 9.6 L7.9 13.8 L3 18 Z M8 9.6 L12.4 13.8 L8 18 Z" fill="#45b045" stroke="#0d940d" stroke-width="1.1" stroke-linejoin="round"/><rect x="13.8" y="12.5" width="5.199999999999999" height="2.8000000000000007" rx="1.4000000000000004" ry="1.4000000000000004" fill="#7a7a7a" stroke="#3f3f3f" stroke-width="1"/></svg>
<svg style="position:absolute;left:637.5px;top:901.5px;overflow:visible;" width="7" height="6" viewBox="0 0 7 6"><path d="M0.3 0.5 L6.7 0.5 L3.5 5 Z" fill="#000"/></svg>
<div style="position:absolute;left:695.3px;top:152.02px;font-family:'Liberation Mono', monospace;font-size:15.9px;line-height:18.48px;color:#111;white-space:pre"><b style="color:#7f0055">public</b> <b style="color:#7f0055">class</b> Example {
    <span style="color:#5a5a5a">@</span>FieldAnnotation
    <b style="color:#7f0055">private</b> <span style="color:#5a5a5a">@</span>TypeAnnotation1 <span style="color:#5a5a5a">@</span>TypeAnnotation2 <span style="color:#5a5a5a">@</span>TypeAnnotation3 String foo;

    <span style="color:#5a5a5a">@</span>MethodAnnotation
    <b style="color:#7f0055">public</b> <span style="color:#5a5a5a">@</span>TypeAnnotation1 <span style="color:#5a5a5a">@</span>TypeAnnotation2 <span style="color:#5a5a5a">@</span>TypeAnnotation3 String bar() {
        <b style="color:#7f0055">return</b> <span style="color:#2a00ff">""</span>;
    }

    <b style="color:#7f0055">public</b> <b style="color:#7f0055">void</b> bar2(
            <span style="color:#5a5a5a">@</span>ParamAnnotation1 <span style="color:#5a5a5a">@</span>ParamAnnotation2 <span style="color:#5a5a5a">@</span>ParameterAnnotation3 String param) {
        <span style="color:#3f7f5f">//</span>
        <span style="color:#5a5a5a">@</span>VariableAnnotation1
        <span style="color:#5a5a5a">@</span>VariableAnnotation2
        <span style="color:#5a5a5a">@</span>VariableAnnotation4
        String localVariable = <span style="color:#2a00ff">""</span>;
        System.out
                .println(localVariable);
    }
}</div>
<div class="btn" style="left:696px;top:881px;width:198px;height:21px;"></div>
<div class="btn" style="left:911px;top:881px;width:197px;height:21px;"></div>
<div class="btn" style="left:1126px;top:881px;width:198px;height:21px;"></div>
<div class="t" style="left:729.90px;top:883.76px;font-size:14.8px;line-height:17.02px;font-weight:normal;color:#242424;letter-spacing:0.315px;">View/edit raw code</div>
<div class="t" style="left:922.60px;top:883.76px;font-size:14.8px;line-height:17.02px;font-weight:normal;color:#242424;letter-spacing:0.384px;">Custom preview contents</div>
<div class="t" style="left:1165.40px;top:883.76px;font-size:14.8px;line-height:17.02px;font-weight:normal;color:#242424;letter-spacing:0.281px;">Show whitespace</div>
<div class="t" style="left:1354.20px;top:883.96px;font-size:14.8px;line-height:17.02px;font-weight:normal;color:#242424;letter-spacing:0.274px;">Preview line width:</div>
<div class="fld" style="left:1494.5px;top:882px;width:52.5px;height:21px;"></div>
<div class="t" style="left:1499.00px;top:884.76px;font-size:14.8px;line-height:17.02px;font-weight:normal;color:#242424;letter-spacing:0.300px;">40</div>
<div class="btn" style="left:1551px;top:880px;width:14.5px;height:21.5px;border-radius:5px"></div>
<div style="position:absolute;left:1551px;top:891px;width:14.5px;height:1px;background:#e6e6e6"></div>
<svg style="position:absolute;left:1554.5px;top:881px;overflow:visible;" width="8" height="20" viewBox="0 0 8 20"><path d="M1 5 L4 2 L7 5" fill="none" stroke="#262626" stroke-width="1.6"/><path d="M1 13 L4 16 L7 13" fill="none" stroke="#262626" stroke-width="1.6"/></svg>
<div class="btn" style="left:1151px;top:956px;width:119px;height:21px;background:#f4f4f4;box-shadow:0 0 0 0.5px rgba(0,0,0,0.06),0 1px 1px rgba(0,0,0,0.06)"></div>
<div class="t" style="left:1191.70px;top:958.26px;font-size:14.8px;line-height:17.02px;font-weight:normal;color:#b4b4b4;letter-spacing:0.146px;">Apply</div>
<div class="btn" style="left:1313px;top:956px;width:119px;height:21px;"></div>
<div class="t" style="left:1349.50px;top:958.26px;font-size:14.8px;line-height:17.02px;font-weight:normal;color:#242424;letter-spacing:0.087px;">Cancel</div>
<div class="btn" style="left:1457px;top:956px;width:119px;height:21px;background:linear-gradient(#2f8dfc,#0a6ff7);box-shadow:0 0.5px 1px rgba(0,0,0,0.2)"></div>
<div class="t" style="left:1507.00px;top:958.26px;font-size:14.8px;line-height:17.02px;font-weight:normal;color:#fff;letter-spacing:-2.091px;">OK</div>
<svg style="position:absolute;left:19.5px;top:953px;overflow:visible;" width="28" height="28" viewBox="0 0 28 28"><circle cx="13.35" cy="13.5" r="12.5" fill="rgba(255,255,255,0.3)" stroke="#46638f" stroke-width="1.35"/><path d="M8.5 9.8 C8.5 6.4 10.7 4.9 13.5 4.9 C16.5 4.9 18.3 6.7 18.3 9.2 C18.3 12.3 13.9 12.8 13.6 16.2 L13.6 17.2" fill="none" stroke="#46638f" stroke-width="2.9"/><circle cx="13.4" cy="20.8" r="2.1" fill="#46638f"/></svg>
<svg style="position:absolute;left:0px;top:0px;overflow:visible;pointer-events:none" width="1600" height="998" viewBox="0 0 1600 998"><path d="M0 0 L3.5 0 Q1.2 0.6 0 2.8 Z" fill="#1a1a1a"/><path d="M1594.6 0 L1600 0 L1600 15.5 Q1598.5 6 1594.6 0 Z" fill="#222"/><path d="M1600 983 L1600 998 L1598.5 998 Q1599.6 991 1600 983 Z" fill="#333"/><path d="M0 995.5 Q0.9 997 2.2 998 L0 998 Z" fill="#222"/></svg>
</body></html>
